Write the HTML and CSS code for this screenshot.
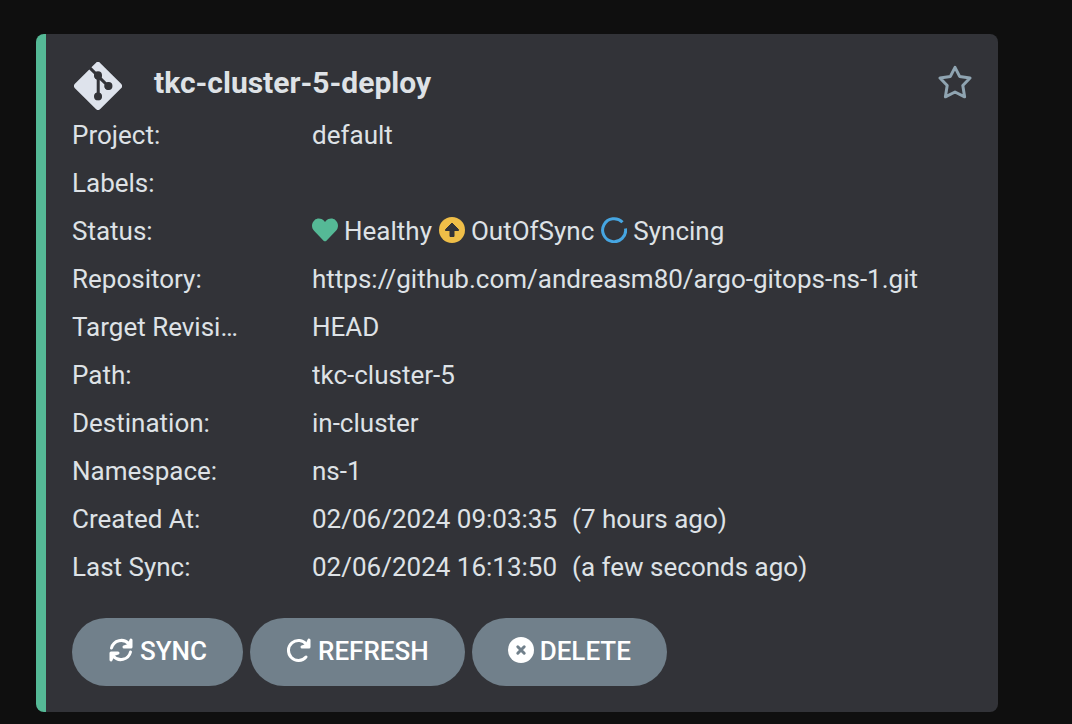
FILE: index.html
```html
<!DOCTYPE html>
<html lang="en">
<head>
<meta charset="utf-8">
<meta name="viewport" content="width=device-width, initial-scale=1">
<title>Applications</title>
<link rel="stylesheet" href="styles.css">
</head>
<body>
<main class="page">
  <article class="card">
    <header class="card-header">
      <svg class="source-icon" viewBox="0 32 448 448" aria-hidden="true"><path d="M439.55 236.05L244 40.45a28.87 28.87 0 0 0-40.81 0l-40.66 40.63 51.52 51.52c27.06-9.14 52.68 16.77 43.39 43.68l49.66 49.66c34.23-11.8 61.18 31 35.47 56.69-26.49 26.49-70.21-2.87-56-37.34L240.22 199v121.85c25.3 12.54 22.26 41.85 9.08 55a34.34 34.34 0 0 1-48.55 0c-17.57-17.6-11.07-46.91 11.25-56v-123c-20.8-8.51-24.6-30.74-18.64-45L142.57 101 8.45 235.14a28.86 28.86 0 0 0 0 40.81l195.61 195.6a28.86 28.86 0 0 0 40.8 0l194.69-194.69a28.86 28.86 0 0 0 0-40.81z"/><g class="nodes"><circle cx="224" cy="155" r="37"/><circle cx="322" cy="256" r="37"/><circle cx="224" cy="353" r="37"/></g></svg>
      <h1 class="title">tkc-cluster-5-deploy</h1>
      <button class="favorite" type="button" aria-label="Add to favorites">
        <svg class="star-icon" viewBox="0 0 34 34" aria-hidden="true"><path d="M17 2.400L21.600 11.400L32 13L24.800 20.500L26.600 31.800L17 27L7.400 31.800L9.200 20.500L2 13L12.400 11.400Z"/></svg>
      </button>
    </header>
    <dl class="details">
      <dt>Project:</dt><dd>default</dd>
      <dt>Labels:</dt><dd></dd>
      <dt>Status:</dt>
      <dd class="status">
        <span class="state"><svg class="icon healthy" viewBox="0 0 512 512" aria-hidden="true"><path d="M462.3 62.6C407.5 15.9 326 24.3 275.700 76.2L256 96.500l-19.700-20.300C186.100 24.300 104.500 15.900 49.700 62.600c-62.800 53.600-66.100 149.800-9.900 207.900l193.500 199.800c12.500 12.900 32.800 12.900 45.300 0l193.500-199.800c56.300-58.100 53-154.300-9.800-207.900z"/></svg>Healthy</span>
        <span class="state"><svg class="icon outofsync" viewBox="0 0 26 26" aria-hidden="true"><circle cx="13" cy="13" r="13"/><path class="cutout" d="M13 6L19.500 12.500V13.500H15V19.500H11V13.500H6.500V12.500Z"/></svg>OutOfSync</span>
        <span class="state"><svg class="icon syncing" viewBox="0 0 26 26" aria-hidden="true"><path d="M24.500 11.500A11.500 11.500 0 1 1 21.500 5.300"/></svg>Syncing</span>
      </dd>
      <dt>Repository:</dt><dd>https://github.com/andreasm80/argo-gitops-ns-1.git</dd>
      <dt>Target Revision:</dt><dd>HEAD</dd>
      <dt>Path:</dt><dd>tkc-cluster-5</dd>
      <dt>Destination:</dt><dd>in-cluster</dd>
      <dt>Namespace:</dt><dd>ns-1</dd>
      <dt>Created At:</dt><dd class="time"><span>02/06/2024 09:03:35</span><span>(7 hours ago)</span></dd>
      <dt>Last Sync:</dt><dd class="time"><span>02/06/2024 16:13:50</span><span>(a few seconds ago)</span></dd>
    </dl>
    <footer class="actions">
      <button class="action" type="button"><svg class="icon line" viewBox="0 0 26 26" aria-hidden="true"><path d="M3.500 11C5.500 3 15.500 .8 21 7M22.500 15C20.500 23 10.500 25.200 5 19"/><path class="head" d="M23 3V10H16L20.500 8.500ZM3 23V16H10L5.500 17.500Z"/></svg>SYNC</button>
      <button class="action" type="button"><svg class="icon line" viewBox="0 0 26 26" aria-hidden="true"><path d="M20.500 7.500A10 10 0 1 0 20 20"/><path class="head" d="M23 3V10H16L20.500 8.500Z"/></svg>REFRESH</button>
      <button class="action" type="button"><svg class="icon delete" viewBox="0 0 26 26" aria-hidden="true"><circle cx="13" cy="13" r="13"/><path d="M9.800 9.800L16.200 16.200M16.200 9.800L9.800 16.200"/></svg>DELETE</button>
    </footer>
  </article>
</main>
</body>
</html>
```
FILE: styles.css
```css
* { box-sizing: border-box; }
body {
  margin: 0;
  background: #0f0f0f;
  color: #dee2e6;
  font-family: Roboto, "Liberation Sans", sans-serif;
  font-size: 26px;
  line-height: 48px;
}
.page { padding: 34px 74px 12px 36px; }
.card {
  padding: 24px 26px 26px;
  background: #323338;
  border-left: 10px solid #55b996;
  border-radius: 8px;
}
.card-header { display: flex; align-items: flex-start; height: 53px; }
.source-icon { width: 48px; height: 48px; margin: 4px 32px 0 2px; fill: #dee3ec; }
.nodes { fill: #323338; }
.title {
  flex: 1;
  margin: 0;
  font-size: 30px;
  line-height: 50px;
  font-weight: 700;
}
.favorite { margin-top: 7px; padding: 0; border: 0; background: none; }
.star-icon {
  display: block;
  width: 34px;
  height: 34px;
  fill: none;
  stroke: #8fa4b1;
  stroke-width: 3;
  stroke-linejoin: round;
}
.details {
  display: grid;
  grid-template-columns: 168px minmax(0, 1fr);
  column-gap: 72px;
  margin: 0;
}
dt, dd {
  min-height: 48px;
  margin: 0;
  overflow: hidden;
  text-overflow: ellipsis;
  white-space: nowrap;
}
.status { display: flex; gap: 7px; }
.state { display: flex; align-items: center; gap: 6px; }
.state .icon { margin-bottom: 2px; }
.time { display: flex; gap: 15px; }
.icon { width: 26px; height: 26px; flex: none; }
.healthy { fill: #55b996; }
.outofsync { fill: #efbe48; }
.cutout { fill: #323338; stroke: #323338; stroke-linejoin: round; }
.syncing { fill: none; stroke: #46a6e2; stroke-width: 3; }
.actions { display: flex; flex-wrap: wrap; gap: 7px; margin-top: 27px; }
.action {
  display: flex;
  align-items: center;
  gap: 6px;
  height: 68px;
  padding: 0 36px 2px;
  border: 0;
  border-radius: 34px;
  background: #71808b;
  color: #fff;
  font: 500 26px/48px Roboto, "Liberation Sans", sans-serif;
}
.action .icon { margin-bottom: 2px; }
.line { fill: none; stroke: #fff; stroke-width: 3; stroke-linecap: round; stroke-linejoin: round; }
.head { fill: #fff; }
.delete { fill: #fff; stroke: none; }
.delete path { stroke: #71808b; stroke-width: 3; stroke-linecap: round; }
```
